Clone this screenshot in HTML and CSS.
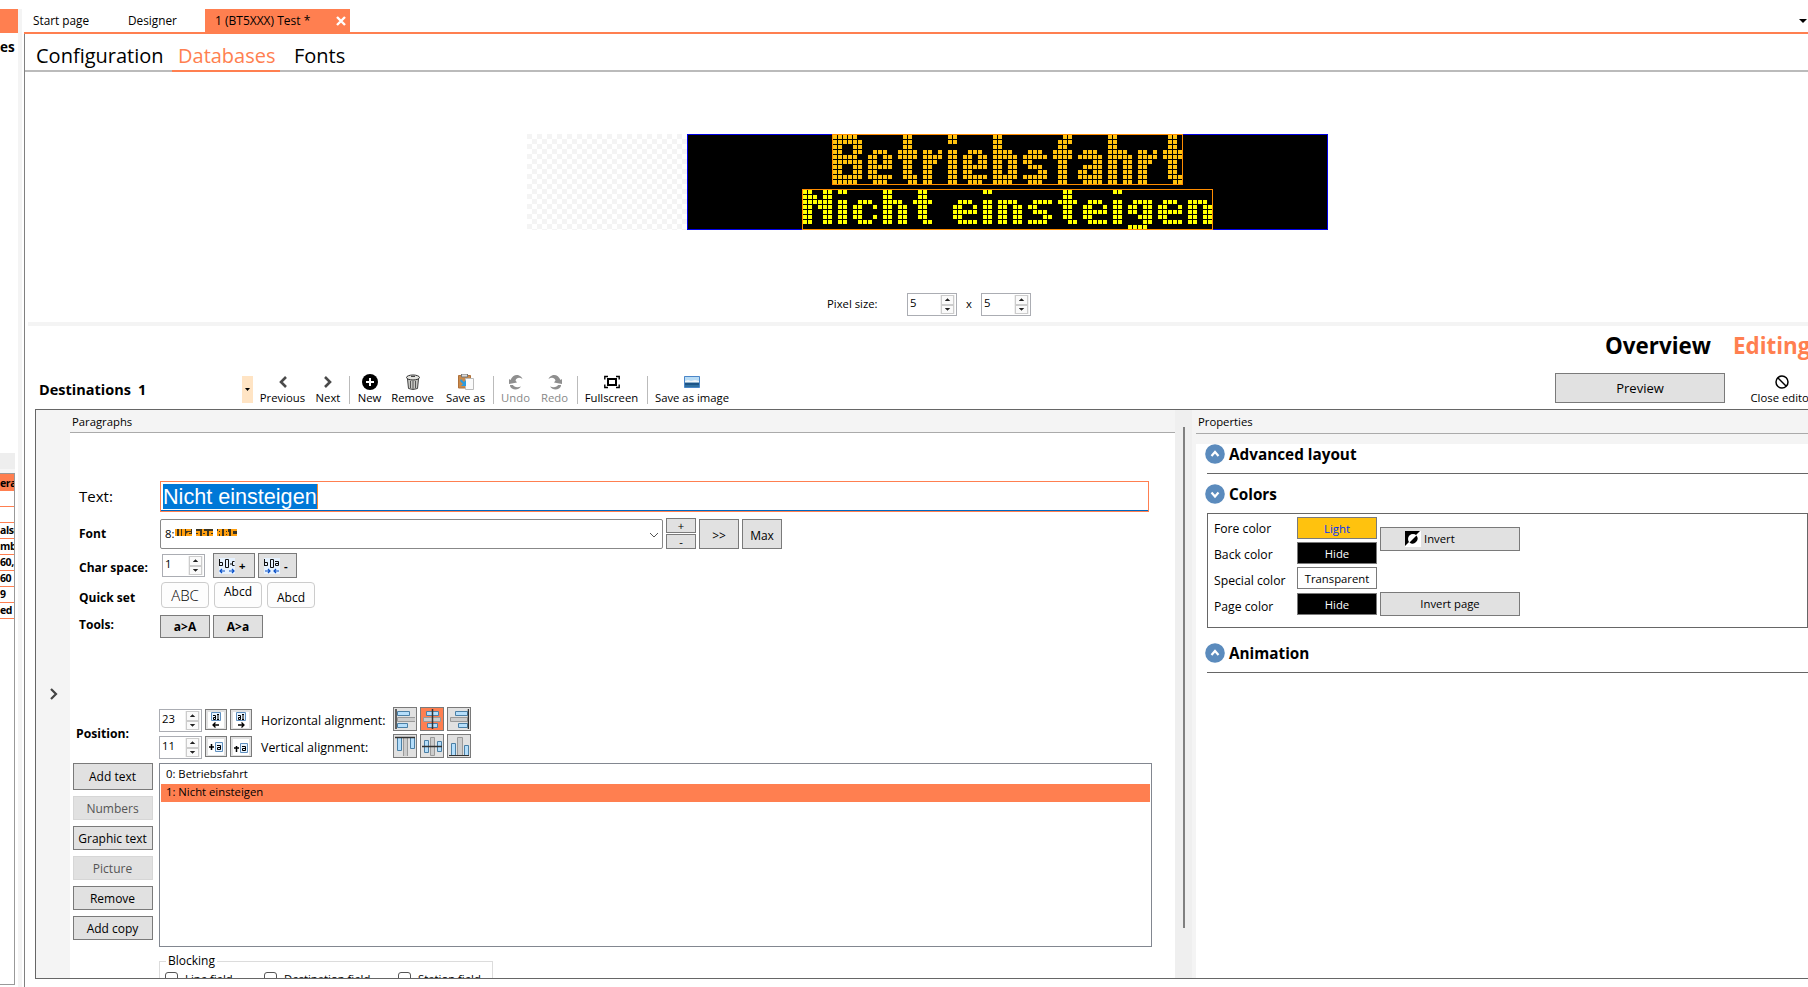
FILE: index.html
```
<!DOCTYPE html>
<html lang="en">
<head>
    <meta charset="UTF-8">
    <meta name="viewport" content="width=device-width, initial-scale=1.0">
    <title>1 (BT5XXX) Test *</title>
    <link rel="stylesheet" href="styles.css">
</head>
<body>
    <div class="app">
        <aside class="side">
            <div class="side-tab"></div>
            <div class="side-title">es</div>
            <div class="side-bar"></div>
            <div class="side-grid">
                <div class="side-head">era</div>
                <div class="side-row"></div>
                <div class="side-row"></div>
                <div class="side-row">alse</div>
                <div class="side-row">mb</div>
                <div class="side-row">60,</div>
                <div class="side-row">60</div>
                <div class="side-row">9</div>
                <div class="side-row">ed</div>
            </div>
        </aside>
        <div class="splitter"></div>

        <main class="main">
            <div class="tabs">
                <span class="tab tab-start">Start page</span>
                <span class="tab tab-designer">Designer</span>
                <span class="tab tab-active"><span class="tab-name">1 (BT5XXX) Test *</span>
                    <svg width="12" height="12" viewBox="0 0 12 12"><path d="M2 2l8 8M10 2l-8 8" stroke="#fff" stroke-width="2.4"/></svg>
                </span>
                <svg class="tabs-more" width="8" height="5" viewBox="0 0 8 5"><path d="M0 0h8L4 4z"/></svg>
            </div>

            <div class="document">
                <nav class="subtabs">
                    <span class="subtab sub-config">Configuration</span>
                    <span class="subtab sub-data">Databases</span>
                    <span class="subtab sub-fonts">Fonts</span>
                </nav>

                <section class="view">
                    <div class="display">
                        <div class="checker"></div>
                        <svg class="led" width="641" height="96" viewBox="0 0 641 96">
                            <rect x=".5" y=".5" width="640" height="95" fill="#000" stroke="#0000e6"/>
                            <rect x="145.5" y=".5" width="350" height="50" fill="#000" stroke="#ff8c00"/>
                            <rect x="115.5" y="55.5" width="410" height="40" fill="#000" stroke="#ff8c00"/>
                            <g id="line1" fill="#ffc20e"></g>
                            <g id="line2" fill="#ffff00"></g>
                        </svg>
                    </div>
                    <div class="pixel-size">
                        <span class="pixel-label">Pixel size:</span>
                        <div class="spin spin-wide"><span>5</span><i><b></b><b></b></i></div>
                        <span class="times">x</span>
                        <div class="spin spin-wide"><span>5</span><i><b></b><b></b></i></div>
                    </div>
                </section>

                <div class="modes">
                    <span class="mode">Overview</span>
                    <span class="mode mode-active">Editing</span>
                </div>

                <div class="toolbar">
                    <div class="dest"><span class="dest-name">Destinations</span><span>1</span></div>
                    <div class="dest-drop"><svg width="5" height="3" viewBox="0 0 5 3"><path d="M0 0h5L2.500 3z"/></svg></div>
                    <div class="tool t-prev">
                        <svg width="16" height="16" viewBox="0 0 16 16"><path d="M11 3L6 8l5 5" fill="none" stroke="#4a4a4a" stroke-width="2.6"/></svg>
                        <span>Previous</span>
                    </div>
                    <div class="tool t-next">
                        <svg width="16" height="16" viewBox="0 0 16 16"><path d="M5 3l5 5-5 5" fill="none" stroke="#4a4a4a" stroke-width="2.6"/></svg>
                        <span>Next</span>
                    </div>
                    <div class="sep"></div>
                    <div class="tool t-new">
                        <svg width="16" height="16" viewBox="0 0 16 16"><circle cx="8" cy="8" r="8"/><path d="M8 4v8M4 8h8" stroke="#fff" stroke-width="2"/></svg>
                        <span>New</span>
                    </div>
                    <div class="tool t-remove">
                        <svg width="16" height="16" viewBox="0 0 16 16"><path d="M2.500 5l1 9.500q4.500 2 9 0l1-9.500z" fill="#c8c8c4" stroke="#444"/><path d="M5.500 7v7M8 7v8M10.500 7v7" stroke="#555"/><ellipse cx="8" cy="3.500" rx="6.500" ry="2.500" fill="#e2e2de" stroke="#333"/><path d="M6 2.500h4" stroke="#444"/></svg>
                        <span>Remove</span>
                    </div>
                    <div class="tool t-saveas">
                        <svg width="16" height="16" viewBox="0 0 16 16"><path d="M.5 1.500h12V14H.5z" fill="#c98a4b" stroke="#b0713a"/><path d="M3.500 0h6v3h-6z" fill="#ddd" stroke="#777"/><path d="M7.500 4.500h8v11h-8z" fill="#fafafa" stroke="#bbb"/><path d="M3 5l3 3 2-2v6H3l2-2-3-3z" fill="#2a9be0"/></svg>
                        <span>Save as</span>
                    </div>
                    <div class="sep"></div>
                    <div class="tool t-undo off">
                        <svg width="16" height="16" viewBox="0 0 16 16"><path d="M1 10V5l1.500 1C4 2 8 0 11 1.500c2 1 3 2 3.500 3.500-3-2-6-1.500-7 1.500L9 8.500zM5 11c1 2 4 3 8 1.500-2 3-6 4-9 2-1.500-1-2-2-2-3.500z" fill="#8f8f8f"/></svg>
                        <span>Undo</span>
                    </div>
                    <div class="tool t-redo off">
                        <svg width="16" height="16" viewBox="0 0 16 16"><path d="M15 10V5l-1.500 1C12 2 8 0 5 1.500 3 2.500 2 3.500 1.500 5c3-2 6-1.500 7 1.500L7 8.500zM11 11c-1 2-4 3-8 1.500 2 3 6 4 9 2 1.500-1 2-2 2-3.500z" fill="#8f8f8f"/></svg>
                        <span>Redo</span>
                    </div>
                    <div class="sep"></div>
                    <div class="tool t-full">
                        <svg width="16" height="16" viewBox="0 0 16 16"><path d="M4 2.500H.8v3M12 2.500h3.200v3M4 13.500H.8v-3M12 13.500h3.200v-3" fill="none" stroke="#000" stroke-width="1.400"/><path d="M4 5h8v6H4z" fill="none" stroke="#000" stroke-width="2"/></svg>
                        <span>Fullscreen</span>
                    </div>
                    <div class="sep"></div>
                    <div class="tool t-image">
                        <svg width="16" height="16" viewBox="0 0 16 16"><path d="M.5 2.500h15v11H.5z" fill="#2f6f9f" stroke="#4b86c8"/><path d="M1 3h14v5H1z" fill="#b9dcf5"/><path d="M1 7l3-1 3 1 4-1 4 1v1.500H1z" fill="#f2f6fa"/><path d="M1 9h14v2H1z" fill="#1c5488"/></svg>
                        <span>Save as image</span>
                    </div>
                    <button class="btn preview">Preview</button>
                    <div class="tool t-close">
                        <svg width="16" height="16" viewBox="0 0 16 16"><circle cx="8" cy="8" r="6" fill="none" stroke="#000" stroke-width="1.500"/><path d="M4 4l8 8" stroke="#000" stroke-width="1.400"/></svg>
                        <span>Close editor</span>
                    </div>
                </div>

                <div class="editor">
                    <div class="rail">
                        <svg width="12" height="14" viewBox="0 0 12 14"><path d="M3 2l5 5-5 5" fill="none" stroke="#444" stroke-width="2.200"/></svg>
                    </div>

                    <section class="paragraphs">
                        <div class="panel-head">Paragraphs</div>

                        <div class="row row-text">
                            <span class="label big">Text:</span>
                            <div class="text-input"><span class="selection">Nicht einsteigen</span></div>
                        </div>
                        <div class="row row-font">
                            <span class="label">Font</span>
                            <div class="combo">
                                <span>8:</span>
                                <svg width="63" height="7" viewBox="0 0 63 7">
                                    <path d="M0 0h17v7H0zM21 0h17v7H21zM42 0h20v7H42z" fill="#3c3420"/>
                                    <path d="M0 0h2v7H0zM4 0h2v7H4zM7 0h3v7H7zM11 0h5v2h-5zM13 3h3v1h-2v1h3v2h-6V5zM21 2h4v5h-4V5h2V4h-2zM27 0h2v2h3v5h-5zM34 2h4v2h-2v1h2v2h-4zM43 0h4v7h-2V5h-1v2h-2V2h1zM49 0h4v3h1v4h-5zM56 0h6v2h-4v3h4v2h-6z" fill="#ff9f0f"/>
                                    <path d="M28 4h2v1h-2zM51 2h1v1h-1zM51 5h1v1h-1zM44 2h1v1h-1z" fill="#3c3420"/>
                                </svg>
                                <svg class="combo-arrow" width="10" height="6" viewBox="0 0 10 6"><path d="M1 1l4 4 4-4" fill="none" stroke="#555"/></svg>
                            </div>
                            <div class="plusminus"><button class="btn">+</button><button class="btn">-</button></div>
                            <button class="btn b40">&gt;&gt;</button>
                            <button class="btn b40">Max</button>
                        </div>
                        <div class="row row-space">
                            <span class="label">Char space:</span>
                            <div class="spin"><span>1</span><i><b></b><b></b></i></div>
                            <button class="btn char-btn cb1">
                                <svg width="16" height="16" viewBox="0 0 16 16"><path d="M0 0h16v16H0z" fill="#e6f2ff"/><path d="M.5 1v7M1 4.500h2.500v3H1M6.500 1.500h3v8h-3zM11 6h2M15.500 3.500h-2v4h2" fill="none" stroke="#111"/><path d="M1 13h5M10 13h5M3 11l-2 2 2 2M13 11l2 2-2 2" fill="none" stroke="#0a50c8" stroke-width="1.200"/></svg>
                                <b>+</b>
                            </button>
                            <button class="btn char-btn cb2">
                                <svg width="16" height="16" viewBox="0 0 16 16"><path d="M0 0h16v16H0z" fill="#e6f2ff"/><path d="M.5 1v7M1 4.500h2.500v3H1M6.500 1.500h3v8h-3zM11 3.500h3.500v4H11.500v-2h3" fill="none" stroke="#111"/><path d="M1 13h5M10 13h5M4 11l2 2-2 2M12 11l-2 2 2 2" fill="none" stroke="#0a50c8" stroke-width="1.200"/></svg>
                                <b>-</b>
                            </button>
                        </div>
                        <div class="row row-quick">
                            <span class="label">Quick set</span>
                            <button class="quick q-mid">ABC</button>
                            <button class="quick q-top">Abcd</button>
                            <button class="quick q-low">Abcd</button>
                        </div>
                        <div class="row row-tools">
                            <span class="label">Tools:</span>
                            <button class="btn case-btn">a&gt;A</button>
                            <button class="btn case-btn">A&gt;a</button>
                        </div>

                        <div class="position">
                            <span class="pos-label">Position:</span>
                            <div class="pos-rows">
                                <div class="pos-row">
                                    <div class="spin"><span>23</span><i><b></b><b></b></i></div>
                                    <button class="btn mini"><svg width="16" height="16" viewBox="0 0 16 16"><path d="M0 0h16v16H0z" fill="#fff"/><path d="M3.500.5h9v8h-9z" fill="#e8f4ff" stroke="#6090c0"/><path d="M5 3.500h2.500v4H5.500v-2h2M10 2.500v5M9 2.500h2M9 7.500h2" fill="none" stroke="#000"/><path d="M5 13h6M7.500 10.500L5 13l2.500 2.500" fill="none" stroke="#000" stroke-width="1.300"/></svg></button>
                                    <button class="btn mini"><svg width="16" height="16" viewBox="0 0 16 16"><path d="M0 0h16v16H0z" fill="#fff"/><path d="M3.500.5h9v8h-9z" fill="#e8f4ff" stroke="#6090c0"/><path d="M5 3.500h2.500v4H5.500v-2h2M10 2.500v5M9 2.500h2M9 7.500h2" fill="none" stroke="#000"/><path d="M5 13h6M8.500 10.500L11 13l-2.500 2.500" fill="none" stroke="#000" stroke-width="1.300"/></svg></button>
                                    <span class="align-label">Horizontal alignment:</span>
                                    <button class="btn align"><svg width="20" height="20" viewBox="0 0 20 20"><path d="M2.500 2.500h12v4h-12zM2.500 14.500h10v4h-10z" class="blue"/><path d="M2.500 8.500h18v4h-18z" class="grey"/><path d="M1 0v20" stroke="#333" stroke-width="1.500"/></svg></button>
                                    <button class="btn align on"><svg width="20" height="20" viewBox="0 0 20 20"><path d="M4.500 2.500h12v4h-12zM5.500 14.500h10v4h-10z" class="blue"/><path d="M1.500 8.500h17v4h-17z" class="grey"/><path d="M10.500 0v20" stroke="#333" stroke-width="1.500"/></svg></button>
                                    <button class="btn align"><svg width="20" height="20" viewBox="0 0 20 20"><path d="M6.500 2.500h12v4h-12zM9.500 14.500h9v4h-9z" class="blue"/><path d="M1.500 8.500h17v4h-17z" class="grey"/><path d="M19.500 0v20" stroke="#333" stroke-width="1.500"/></svg></button>
                                </div>
                                <div class="pos-row">
                                    <div class="spin"><span>11</span><i><b></b><b></b></i></div>
                                    <button class="btn mini"><svg width="16" height="16" viewBox="0 0 16 16"><path d="M0 0h16v16H0z" fill="#fff"/><path d="M7.500 3.500h7v9h-7z" fill="#e8f4ff" stroke="#6090c0"/><path d="M9 6.500h3.500v4H9.500v-2h3" fill="none" stroke="#000"/><path d="M3.500 5v6M1 8h5" fill="none" stroke="#000" stroke-width="1.500"/></svg></button>
                                    <button class="btn mini"><svg width="16" height="16" viewBox="0 0 16 16"><path d="M0 0h16v16H0z" fill="#fff"/><path d="M7.500 4.500h7v9h-7z" fill="#e8f4ff" stroke="#6090c0"/><path d="M9 7.500h3.500v4H9.500v-2h3" fill="none" stroke="#000"/><path d="M3.500 7v6M1 9h5" fill="none" stroke="#000" stroke-width="1.500"/></svg></button>
                                    <span class="align-label">Vertical alignment:</span>
                                    <button class="btn align"><svg width="20" height="20" viewBox="0 0 20 20"><path d="M2.500 1.500h4v13h-4zM15.500 1.500h4v11h-4z" class="blue"/><path d="M8.500 1.500h4v19h-4z" class="grey"/><path d="M0 1.500h20" stroke="#333" stroke-width="1.500"/></svg></button>
                                    <button class="btn align"><svg width="20" height="20" viewBox="0 0 20 20"><path d="M2.500 4.500h4v12h-4zM15.500 5.500h4v10h-4z" class="blue"/><path d="M8.500 1.500h4v18h-4z" class="grey"/><path d="M0 10.500h20" stroke="#333" stroke-width="1.500"/></svg></button>
                                    <button class="btn align"><svg width="20" height="20" viewBox="0 0 20 20"><path d="M2.500 7.500h4v12h-4zM15.500 9.500h4v10h-4z" class="blue"/><path d="M8.500 1.500h5v18h-5z" class="grey"/><path d="M0 20h20" stroke="#333" stroke-width="2"/></svg></button>
                                </div>
                            </div>
                        </div>

                        <div class="items">
                            <div class="item-buttons">
                                <button class="btn">Add text</button>
                                <button class="btn" disabled>Numbers</button>
                                <button class="btn">Graphic text</button>
                                <button class="btn" disabled>Picture</button>
                                <button class="btn">Remove</button>
                                <button class="btn">Add copy</button>
                            </div>
                            <div class="list">
                                <div class="item">0: Betriebsfahrt</div>
                                <div class="item selected">1: Nicht einsteigen</div>
                            </div>
                        </div>

                        <fieldset class="blocking">
                            <legend>Blocking</legend>
                            <label class="c1"><i></i>Line field</label>
                            <label class="c2"><i></i>Destination field</label>
                            <label><i></i>Station field</label>
                        </fieldset>
                    </section>

                    <div class="divider"><div class="divider-line"></div></div>

                    <section class="properties">
                        <div class="panel-head prop-head">Properties</div>
                        <div class="prop-body">
                            <div class="group g-layout">
                                <svg width="20" height="20" viewBox="0 0 20 20"><circle cx="10" cy="10" r="9.800" fill="#5b8bbd"/><path d="M6.500 12L10 8l3.500 4" fill="none" stroke="#fff" stroke-width="2.200"/></svg>
                                <span>Advanced layout</span>
                            </div>
                            <div class="group g-colors">
                                <svg width="20" height="20" viewBox="0 0 20 20"><circle cx="10" cy="10" r="9.800" fill="#5b8bbd"/><path d="M6.500 8.500l3.500 4 3.500-4" fill="none" stroke="#fff" stroke-width="2.200"/></svg>
                                <span>Colors</span>
                            </div>
                            <div class="colors">
                                <div class="color-names">
                                    <span>Fore color</span>
                                    <span>Back color</span>
                                    <span>Special color</span>
                                    <span>Page color</span>
                                </div>
                                <div class="swatches">
                                    <button class="btn sw light">Light</button>
                                    <button class="btn sw dark">Hide</button>
                                    <button class="btn sw clear">Transparent</button>
                                    <button class="btn sw dark last">Hide</button>
                                </div>
                                <div class="inverts">
                                    <button class="btn inv"><svg width="16" height="16" viewBox="0 0 16 16"><path d="M0 0h16v16H0z" fill="#fff"/><path d="M0 0h15L0 15z"/><circle cx="8" cy="8" r="5" fill="#fff"/><path d="M11.500 4.500a5 5 0 0 1-7 7z"/></svg>Invert</button>
                                    <button class="btn inv-page">Invert page</button>
                                </div>
                            </div>
                            <div class="group g-anim">
                                <svg width="20" height="20" viewBox="0 0 20 20"><circle cx="10" cy="10" r="9.800" fill="#5b8bbd"/><path d="M6.500 12L10 8l3.500 4" fill="none" stroke="#fff" stroke-width="2.200"/></svg>
                                <span>Animation</span>
                            </div>
                        </div>
                    </section>
                </div>
            </div>
        </main>
    </div>
    <script src="led.js"></script>
</body>
</html>
```
FILE: led.js
```
// column patterns of the two fonts, one string per row
const tall = {
    B: ['#####.', '######', '##..##', '##..##', '#####.', '######', '##..##', '##..##', '######', '#####.'],
    e: ['', '', '', '.###.', '##.##', '##.##', '#####', '##...', '#####', '.###.'],
    t: ['.##.', '.##.', '.##.', '####', '####', '.##.', '.##.', '.##.', '.###', '..##'],
    r: ['', '', '', '##.#', '####', '###.', '##..', '##..', '##..', '##..'],
    i: ['##', '##', '', '##', '##', '##', '##', '##', '##', '##'],
    b: ['##...', '##...', '##...', '####.', '#####', '##.##', '##.##', '##.##', '#####', '####.'],
    s: ['', '', '', '.###.', '#####', '##...', '.###.', '...##', '#####', '.###.'],
    f: ['..##', '.###', '.##.', '####', '####', '.##.', '.##.', '.##.', '.##.', '.##.'],
    a: ['', '', '', '.###.', '#####', '...##', '.####', '##.##', '#####', '.####'],
    h: ['##...', '##...', '##...', '####.', '#####', '##.##', '##.##', '##.##', '##.##', '##.##']
};
const low = {
    N: ['##..##', '###.##', '######', '##.###', '##..##', '##..##', '##..##'],
    i: ['##', '', '##', '##', '##', '##', '##'],
    c: ['', '', '.###.', '##..#', '##...', '##..#', '.###.'],
    h: ['##...', '##...', '####.', '##.##', '##.##', '##.##', '##.##'],
    t: ['.##.', '.##.', '####', '.##.', '.##.', '.##.', '..##'],
    e: ['', '', '.###.', '##..#', '#####', '##...', '.####'],
    n: ['', '', '####.', '##.##', '##.##', '##.##', '##.##'],
    s: ['', '', '.####', '##...', '.###.', '...##', '####.'],
    g: ['', '', '.####', '##.##', '##.##', '..###', '...##', '####.'],
    ' ': ['...']
};

function drawLine(id, font, text, left, top) {
    const group = document.getElementById(id);
    let x = left;
    for (const letter of text) {
        const rows = font[letter];
        let width = 0;
        rows.forEach((row, y) => {
            width = Math.max(width, row.length);
            [...row].forEach((dot, col) => {
                if (dot !== '#') return;
                const rect = document.createElementNS('http://www.w3.org/2000/svg', 'rect');
                rect.setAttribute('x', x + col * 5);
                rect.setAttribute('y', top + y * 5);
                rect.setAttribute('width', 4);
                rect.setAttribute('height', 4);
                group.appendChild(rect);
            });
        });
        x += (width + (letter === ' ' ? 0 : 1)) * 5;
    }
}

drawLine('line1', tall, 'Betriebsfahrt', 146, 1);
drawLine('line2', low, 'Nicht einsteigen', 116, 56);
```
FILE: styles.css
```
* {
    box-sizing: border-box;
}
body {
    margin: 0;
    width: 1808px;
    height: 987px;
    overflow: hidden;
    background: #fff;
    color: #000;
    font-family: "Open Sans", "Noto Sans", sans-serif;
    font-size: 11.3px;
    line-height: 16px;
}
span, button, legend, label {
    white-space: nowrap;
}
svg {
    display: block;
    flex: none;
}
.app {
    display: flex;
    height: 987px;
    overflow: hidden;
}

/* left panel */
.side {
    width: 18px;
    padding-top: 9px;
    overflow: hidden;
    font-weight: bold;
    flex: none;
}
.side-tab {
    height: 24px;
    background: #ff7f50;
}
.side-title {
    height: 420px;
    padding-top: 6px;
    font-size: 13.5px;
}
.side-bar {
    width: 15px;
    height: 20px;
    background: #eee;
    border-bottom: 4px solid #f6f6f6;
}
.side-grid {
    width: 15px;
    height: 512px;
    overflow: hidden;
    border: 1px solid #999;
    border-left: none;
    font-size: 10.5px;
    letter-spacing: -0.4px;
}
.side-head {
    height: 17px;
    background: #ff7f50;
    line-height: 18px;
}
.side-row {
    height: 16px;
    line-height: 15px;
    border-bottom: 1px solid #ff7f50;
}
.splitter {
    width: 4px;
    margin: 9px 2px 0 0;
    background: #f4f4f4;
    flex: none;
}

/* tabs */
.main {
    width: 1784px;
    flex: none;
}
.tabs {
    display: flex;
    height: 34px;
    padding-top: 9px;
    border-bottom: 2px solid #ff7f50;
    font-size: 11.8px;
    line-height: 23px;
}
.tab-start {
    width: 95px;
    padding-left: 9px;
}
.tab-designer {
    width: 86px;
    padding-left: 9px;
}
.tab-active {
    display: flex;
    align-items: center;
    justify-content: space-between;
    width: 145px;
    padding: 0 3px 0 10px;
    background: #ff7f50;
}
.tab-name {
    font-size: 12px;
}
.tabs-more {
    margin: 10px 1px 0 auto;
}
.document {
    height: 953px;
    border-left: 1px solid #808080;
}
.subtabs {
    display: flex;
    height: 38px;
    font-size: 20px;
    line-height: 44px;
    border-bottom: 2px solid #bbb;
}
.sub-config {
    width: 147px;
    padding-left: 11px;
}
.sub-data {
    width: 108px;
    height: 38px;
    padding-left: 6px;
    color: #ff7f50;
    border-bottom: 2px solid #ff7f50;
}
.sub-fonts {
    padding-left: 14px;
}

/* display */
.view {
    height: 254px;
    margin-left: 3px;
    padding-top: 62px;
    border-bottom: 4px solid #f4f4f4;
}
.display {
    display: flex;
    margin-left: 499px;
}
.checker {
    width: 160px;
    height: 96px;
    background: conic-gradient(#f4f4f4 25%, #fff 0 50%, #f4f4f4 0 75%, #fff 0) 5px 0 / 10px 10px;
}
.pixel-size {
    display: flex;
    height: 23px;
    margin: 63px 0 0 799px;
    line-height: 21px;
}
.pixel-label {
    width: 80px;
}
.times {
    width: 24px;
    text-align: center;
}
.spin {
    display: flex;
    justify-content: space-between;
    width: 43px;
    height: 23px;
    padding: 1px 1px 0 2px;
    border: 1px solid #abadb3;
    background: #fff;
    line-height: 16px;
    flex: none;
}
.spin-wide {
    width: 50px;
}
.spin i {
    display: flex;
    flex-direction: column;
    width: 15px;
    height: 19px;
    padding: 0 1px;
    background: #f0f0f0;
}
.spin b {
    display: flex;
    align-items: center;
    justify-content: center;
    flex: 1;
    border: 1px solid #ccc;
    background: #fafafa;
}
.spin b::before {
    content: "";
    width: 6px;
    height: 3px;
    background: #222;
    clip-path: polygon(50% 0, 100% 100%, 0 100%);
}
.spin b:last-child::before {
    clip-path: polygon(0 0, 100% 0, 50% 100%);
}

/* mode switch and toolbar */
.modes {
    display: flex;
    height: 44px;
    padding-left: 1580px;
    font-size: 22.4px;
    font-weight: bold;
    line-height: 40px;
    overflow: hidden;
}
.mode {
    width: 128px;
    flex: none;
}
.mode-active {
    color: #ff7f50;
}
.toolbar {
    display: flex;
    height: 39px;
    padding-left: 14px;
    overflow: hidden;
}
.dest {
    display: flex;
    width: 203px;
    padding-top: 12px;
    font-size: 14.5px;
    font-weight: bold;
    flex: none;
}
.dest-name {
    width: 99px;
}
.dest-drop {
    display: flex;
    align-items: center;
    justify-content: center;
    width: 11px;
    height: 27px;
    margin-top: 6px;
    background: #ffe4c4;
    flex: none;
}
.tool {
    display: flex;
    flex-direction: column;
    align-items: center;
    padding-top: 4px;
    line-height: 16px;
    flex: none;
}
.sep {
    width: 1px;
    height: 28px;
    margin-top: 6px;
    background: #bbb;
    flex: none;
}
.off {
    color: #888;
}
.t-prev { width: 47px; margin-left: 6px; }
.t-next { width: 26px; margin: 0 8px 0 9px; }
.t-new { width: 25px; margin-left: 7px; }
.t-remove { width: 43px; margin-left: 9px; }
.t-saveas { width: 37px; margin: 0 9px 0 13px; }
.t-undo { width: 29px; margin-left: 7px; }
.t-redo { width: 27px; margin: 0 9px 0 11px; }
.t-full { width: 53px; margin: 0 9px 0 7px; }
.t-image { width: 74px; margin-left: 7px; }
.t-close { width: 66px; margin-left: 24px; }

.btn {
    padding: 0;
    border: 1px solid #7a7a7a;
    background: #e1e1e1;
    color: #000;
    font: inherit;
    text-align: center;
    flex: none;
}
.btn:disabled {
    border-color: #d6d6d6;
    color: #555;
}
.preview {
    width: 170px;
    height: 30px;
    margin: 3px 0 0 826px;
    font-size: 13px;
}

/* editor */
.editor {
    display: flex;
    width: 1773px;
    height: 570px;
    margin-left: 10px;
    border: 1px solid #666;
    border-right: none;
    background: #f4f4f4;
    overflow: hidden;
}
.rail {
    width: 34px;
    padding: 277px 0 0 12px;
    flex: none;
}
.paragraphs {
    width: 1105px;
    background: #fff;
    flex: none;
}
.panel-head {
    height: 23px;
    padding: 4px 0 0 2px;
    border-bottom: 1px solid #aaa;
    background: #f4f4f4;
    line-height: 15px;
}
.row {
    display: flex;
    padding-left: 9px;
}
.label {
    width: 81px;
    font-size: 12px;
    font-weight: bold;
    flex: none;
}
.big {
    font-size: 15px;
    font-weight: normal;
}
.row-text {
    height: 31px;
    margin-top: 48px;
    line-height: 31px;
}
.text-input {
    width: 989px;
    height: 31px;
    padding: 2px;
    border: 1px solid #ff7f50;
    box-shadow: inset 0 -1px #0067c0;
}
.selection {
    display: block;
    width: 155px;
    height: 25px;
    border-right: 1px solid #ff8728;
    background: #0078d7;
    color: #fff;
    font: 21.6px/26px "Liberation Sans", sans-serif;
}
.row-font {
    height: 31px;
    margin-top: 6px;
    line-height: 32px;
}
.combo {
    display: flex;
    width: 503px;
    height: 30px;
    margin: 1px 3px 0 0;
    padding: 0 4px;
    border: 1px solid #888;
    border-radius: 2px;
    line-height: 27px;
}
.combo svg {
    margin: 9px 0 0 1px;
}
.combo .combo-arrow {
    margin: 12px -1px 0 auto;
}
.plusminus {
    display: flex;
    flex-direction: column;
    gap: 1px;
    width: 33px;
}
.plusminus .btn {
    width: 30px;
    height: 15px;
    line-height: 12px;
}
.b40 {
    width: 40px;
    height: 30px;
    margin: 1px 3px 0 0;
    padding-bottom: 2px;
    font-size: 12px;
}
.row-space {
    height: 25px;
    margin-top: 4px;
    line-height: 30px;
}
.row-space .spin {
    margin: 1px 8px 0 2px;
}
.char-btn {
    display: flex;
    align-items: center;
    height: 25px;
    padding-left: 5px;
    gap: 4px;
}
.cb1 {
    width: 42px;
    margin-right: 3px;
}
.cb2 {
    width: 39px;
}
.row-quick {
    height: 26px;
    margin-top: 4px;
    line-height: 31px;
}
.quick {
    width: 48px;
    height: 26px;
    margin: 0 4px 0 1px;
    padding: 0;
    border: 1px solid #ccc;
    border-radius: 4px;
    background: #fdfdfd;
    color: #000;
    font: 12px/16px "Open Sans", sans-serif;
}
.q-mid {
    font-size: 15px;
    font-weight: 300;
}
.q-top {
    padding-bottom: 7px;
}
.q-low {
    padding-top: 6px;
}
.row-tools {
    height: 23px;
    margin-top: 7px;
    line-height: 19px;
}
.case-btn {
    width: 50px;
    height: 23px;
    margin-right: 3px;
    font-size: 12px;
    font-weight: bold;
}
.position {
    display: flex;
    height: 56px;
    margin-top: 69px;
    padding-left: 6px;
}
.pos-label {
    width: 83px;
    padding-top: 19px;
    font-size: 12.2px;
    font-weight: bold;
}
.pos-rows {
    display: flex;
    flex-direction: column;
    gap: 3px;
}
.pos-row {
    display: flex;
    height: 24px;
}
.pos-row .spin {
    margin: 2px 3px 0 0;
}
.mini {
    display: flex;
    align-items: center;
    justify-content: center;
    width: 22px;
    height: 21px;
    margin: 2px 3px 0 0;
}
.align-label {
    width: 138px;
    padding-left: 6px;
    font-size: 12.4px;
    line-height: 27px;
}
.align {
    width: 24px;
    height: 24px;
    margin-right: 3px;
    padding: 1px;
    overflow: hidden;
}
.on {
    background: #ff7f50;
}
.blue {
    fill: #b5defb;
    stroke: #4a7fa5;
}
.grey {
    fill: #ccc;
    stroke: #999;
}
.items {
    display: flex;
    padding-left: 3px;
}
.item-buttons {
    display: flex;
    flex-direction: column;
    gap: 6px;
    width: 86px;
}
.item-buttons .btn {
    width: 80px;
    height: 24px;
    padding: 1px 1px 0 0;
    font-size: 12px;
}
.item-buttons .btn:first-child {
    height: 27px;
}
.list {
    width: 993px;
    height: 184px;
    padding: 2px 1px;
    border: 1px solid #828790;
}
.item {
    height: 18px;
    padding-left: 5px;
    line-height: 15px;
}
.selected {
    line-height: 16px;
    background: #ff7f50;
}
.blocking {
    display: flex;
    width: 334px;
    height: 60px;
    margin: 6px 0 0 89px;
    padding: 0 0 0 5px;
    border: 1px solid #dcdcdc;
}
.blocking legend {
    margin-left: 1px;
    padding: 0 2px;
    font-size: 12px;
}
.blocking label {
    display: flex;
    gap: 7px;
    margin-top: 2px;
}
.blocking i {
    width: 13px;
    height: 13px;
    margin-top: 1px;
    border: 1px solid #555;
    border-radius: 3px;
}
.c1 { width: 99px; }
.c2 { width: 134px; }

.divider {
    width: 17px;
    padding: 17px 0 0 8px;
    background: #efefef;
    flex: none;
}
.divider-line {
    width: 2px;
    height: 501px;
    background: #808080;
}

/* properties */
.properties {
    width: 616px;
    padding-left: 4px;
    flex: none;
}
.prop-head {
    height: 24px;
}
.prop-body {
    height: 544px;
    padding-left: 11px;
    background: #fff;
}
.group {
    display: flex;
    gap: 4px;
    height: 30px;
    font-size: 15.3px;
    font-weight: bold;
    line-height: 21px;
}
.group svg {
    margin-left: -2px;
}
.g-layout,
.g-anim {
    border-bottom: 1px solid #666;
}
.g-layout {
    margin-top: 10px;
}
.g-colors {
    margin-top: 10px;
    height: 29px;
}
.colors {
    display: flex;
    height: 115px;
    border: 1px solid #666;
}
.color-names {
    display: flex;
    flex-direction: column;
    gap: 10px;
    width: 89px;
    padding: 7px 0 0 6px;
    font-size: 12.2px;
}
.swatches {
    display: flex;
    flex-direction: column;
    gap: 3px;
    width: 83px;
    padding-top: 3px;
}
.sw {
    width: 80px;
    height: 22px;
    padding-top: 2px;
}
.light {
    background: #ffc20e;
    color: #0033ff;
}
.dark {
    background: #000;
    color: #fff;
}
.clear {
    background: #fff;
}
.last {
    margin-top: 1px;
}
.inverts {
    padding-top: 13px;
}
.inv,
.inv-page {
    display: flex;
    align-items: center;
    width: 140px;
    height: 24px;
}
.inv {
    gap: 3px;
    padding-left: 24px;
}
.inv-page {
    justify-content: center;
    margin-top: 41px;
}
.g-anim {
    margin-top: 15px;
}
```
